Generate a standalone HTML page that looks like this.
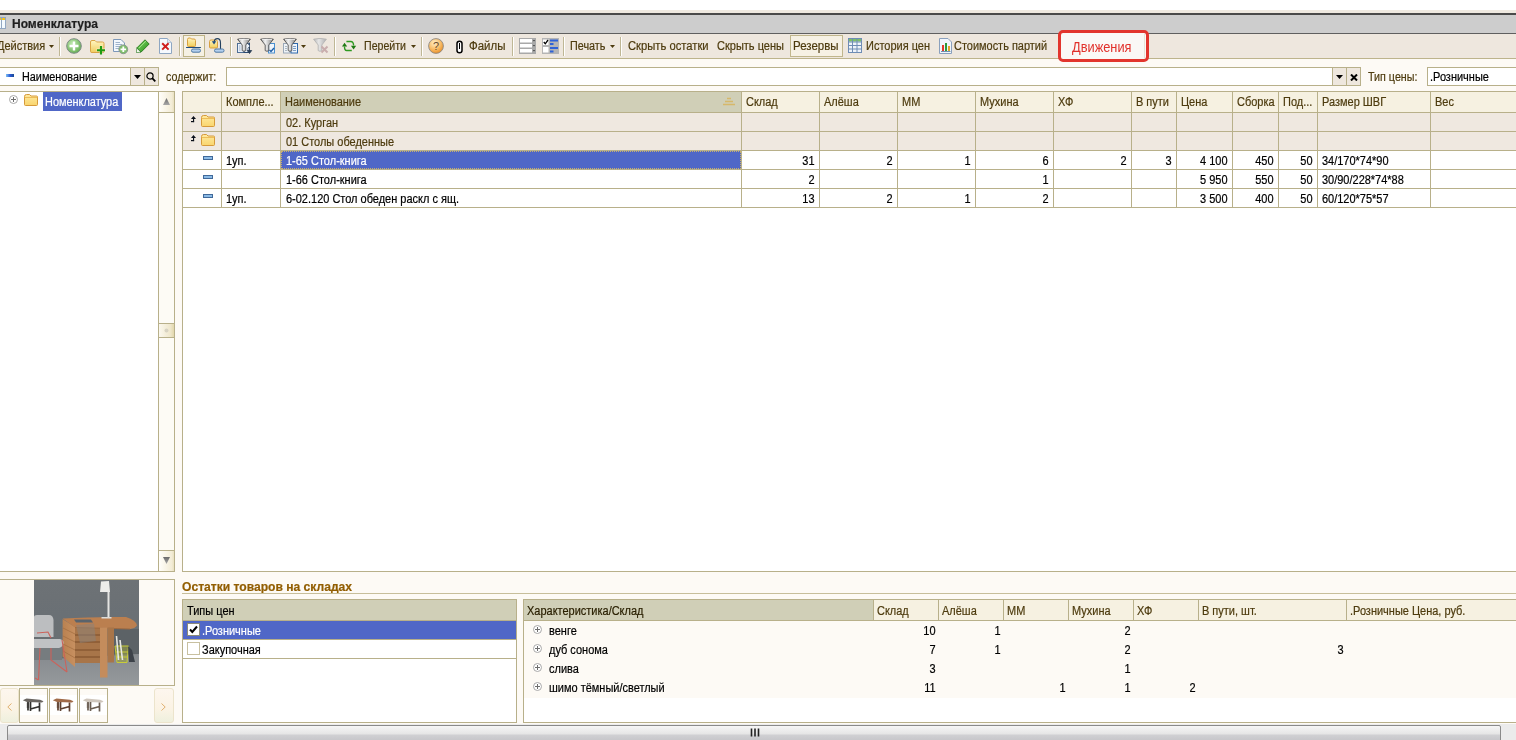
<!DOCTYPE html>
<html><head><meta charset="utf-8"><style>
html,body{margin:0;padding:0;}
body{width:1516px;height:740px;overflow:hidden;position:relative;background:#fdfaf5;font-family:"Liberation Sans",sans-serif;}
body>div,body>svg{position:absolute;box-sizing:content-box;}
.t{white-space:nowrap;line-height:13px;font-size:11px;-webkit-text-stroke:0.2px currentColor;}
</style></head><body>
<div style="left:0;top:0;width:1516px;height:10px;background:#fff"></div>
<div style="left:0px;top:10px;width:1516px;height:3px;background:#efe9e0;"></div><div style="left:0px;top:13px;width:1516px;height:2px;background:#4a4a4a;"></div><div style="left:0px;top:15px;width:1516px;height:18px;background:#cdcdcd;"></div><div style="left:0px;top:33px;width:1516px;height:1px;background:#5f5f5f;"></div><svg style="left:0px;top:17px" width="7" height="12" viewBox="0 0 7 12"><rect x="-2.5" y="0.5" width="4" height="11" fill="#f4fbff" stroke="#93a8c2"/><rect x="1.5" y="0.5" width="4" height="11" fill="#f4fbff" stroke="#93a8c2"/><rect x="2" y="1" width="3" height="2" fill="#f2c21e"/><rect x="-2" y="1" width="3" height="2" fill="#f2c21e"/></svg><div class="t" style="top:18px;color:#1e1e1e;font-size:12px;font-weight:bold;left:12.399126637554586px;transform:scaleX(1.0014556040756915);transform-origin:0 0;">Номенклатура</div><div style="left:0px;top:34px;width:1516px;height:24px;background:#eee7de;"></div><div style="left:0px;top:58px;width:1516px;height:1px;background:#bdb48c;"></div><div class="t" style="top:40px;color:#4d3b0e;font-size:12px;left:-3px;transform:scaleX(0.915);transform-origin:0 0;">Действия</div><svg style="left:49px;top:45px" width="5" height="3" viewBox="0 0 5 3"><path d="M0 0H5L2.5 3Z" fill="#4d3b0e"/></svg><div style="left:59px;top:37px;width:1px;height:19px;background:#bfb795;"></div><div style="left:60px;top:37px;width:1px;height:19px;background:#ffffff;"></div><svg style="left:66px;top:38px" width="16" height="16" viewBox="0 0 16 16"><defs><radialGradient id="gp" cx="40%" cy="35%" r="70%"><stop offset="0" stop-color="#c4ebb2"/><stop offset="1" stop-color="#62ac50"/></radialGradient></defs><circle cx="8" cy="8" r="7.3" fill="url(#gp)" stroke="#7d8b86" stroke-width="1"/><path d="M8 3.5V12.5M3.5 8H12.5" stroke="#fff" stroke-width="2.4"/></svg><svg style="left:90px;top:40px" width="16" height="15" viewBox="0 0 16 15"><defs><linearGradient id="fy" x1="0" y1="0" x2="0" y2="1"><stop offset="0" stop-color="#fff6c0"/><stop offset="1" stop-color="#f0cc60"/></linearGradient></defs><path d="M0.5 2Q0.5 0.5 2 0.5H5L6.5 2H12.5Q14 2 14 3.5V11.5Q14 12.5 12.5 12.5H2Q0.5 12.5 0.5 11.5Z" fill="url(#fy)" stroke="#d9a445"/><path d="M11 5.5V14.5M6.5 10H15.5" stroke="#fff" stroke-width="3.5" opacity=".35"/><path d="M11 6V14.5M7 10.25H15" stroke="#1e9a12" stroke-width="2.2"/></svg><svg style="left:113px;top:39px" width="16" height="16" viewBox="0 0 16 16"><path d="M0.5 0.5H8L11.5 4V12.5H0.5Z" fill="#f4f8fd" stroke="#7d98b9"/><path d="M2.5 3.5H7M2.5 5.5H9M2.5 7.5H9M2.5 9.5H6" stroke="#9fb3cc"/><circle cx="10.3" cy="10.3" r="4.4" fill="#7fbf6a" stroke="#8b9a90"/><path d="M10.3 7.5V13.1M7.5 10.3H13.1" stroke="#fff" stroke-width="1.8"/></svg><svg style="left:136px;top:39px" width="14" height="14" viewBox="0 0 14 14"><defs><linearGradient id="pg" x1="0" y1="0" x2="1" y2="1"><stop offset="0" stop-color="#8ee070"/><stop offset="1" stop-color="#1e8a14"/></linearGradient></defs><path d="M9 0.8L13.2 5L5 13.2L0.8 9Z" fill="url(#pg)" stroke="#1a6e12" stroke-width=".8"/><path d="M0.8 9L5 13.2L0.3 13.7Z" fill="#f4f8ee" stroke="#1a6e12" stroke-width=".6"/><path d="M3 9L10 2" stroke="#b8f0a0" stroke-width="1" opacity=".7"/></svg><svg style="left:159px;top:38px" width="13" height="16" viewBox="0 0 13 16"><path d="M0.5 0.5H8.5L12.5 4.5V15.5H0.5Z" fill="#f5f9fe" stroke="#8ea6c2"/><path d="M8.5 0.5V4.5H12.5" fill="#dfe8f2" stroke="#a8bcd2" stroke-width=".8"/><path d="M3.2 5.2L9.6 11.6M9.6 5.2L3.2 11.6" stroke="#cf1f1f" stroke-width="2"/></svg><div style="left:179px;top:37px;width:1px;height:19px;background:#bfb795;"></div><div style="left:180px;top:37px;width:1px;height:19px;background:#ffffff;"></div><div style="left:183px;top:35px;width:20px;height:20px;background:#f5f0e3;border:1px solid #bdb387;"></div><svg style="left:186px;top:37px" width="16" height="17" viewBox="0 0 16 17"><defs><linearGradient id="fy2" x1="0" y1="0" x2="0" y2="1"><stop offset="0" stop-color="#fff4c0"/><stop offset="1" stop-color="#f2cf5a"/></linearGradient></defs><path d="M1.5 2.5Q1.5 1 3 1H4.5L5.5 2H8Q9.5 2 9.5 3.5V8.5Q9.5 9.5 8.5 9.5H2.5Q1.5 9.5 1.5 8.5Z" fill="url(#fy2)" stroke="#d8a040"/><path d="M0.5 10.5H14.5" stroke="#1f4c7c" stroke-width="1.1" stroke-linecap="round"/><rect x="5.5" y="12" width="9" height="3.2" rx="1.5" fill="#b4d0ee" stroke="#4e78a4"/></svg><svg style="left:208px;top:37px" width="17" height="17" viewBox="0 0 17 17"><defs><linearGradient id="fy3" x1="0" y1="0" x2="0" y2="1"><stop offset="0" stop-color="#fff4c0"/><stop offset="1" stop-color="#f2cf5a"/></linearGradient></defs><path d="M1.5 4.5Q1.5 3 3 3H8Q9.5 3 9.5 4.5V10Q9.5 11 8.5 11H2.5Q1.5 11 1.5 10Z" fill="url(#fy3)" stroke="#d8a040"/><path d="M6 5.5C6.5 0.5 12.5 0 12.5 6V14" fill="none" stroke="#23405f" stroke-width="1.1"/><path d="M3.8 4.3L6 7.5L8.3 4.3Z" fill="#1f4c7c"/><rect x="6.5" y="12" width="9.5" height="3.2" rx="1.5" fill="#b4d0ee" stroke="#4e78a4"/></svg><div style="left:230px;top:37px;width:1px;height:19px;background:#bfb795;"></div><div style="left:231px;top:37px;width:1px;height:19px;background:#ffffff;"></div><svg style="left:237px;top:38px" width="16" height="16" viewBox="0 0 16 16"><defs><linearGradient id="fg" x1="0" y1="0" x2="1" y2="0"><stop offset="0" stop-color="#8a8a8a"/><stop offset=".35" stop-color="#f4f4f4"/><stop offset=".6" stop-color="#c8c8c8"/><stop offset="1" stop-color="#7a7a7a"/></linearGradient><linearGradient id="fgd" x1="0" y1="0" x2="1" y2="0"><stop offset="0" stop-color="#b8b8b8"/><stop offset=".4" stop-color="#e6e6e6"/><stop offset="1" stop-color="#b0b0b0"/></linearGradient></defs><rect x="0.5" y="5.5" width="7" height="9" fill="#eaf1f9" stroke="#4f6f96"/><path d="M2 8H3.5M2 10H3.5M2 12H3.5" stroke="#8aa0bc" stroke-width=".8"/><rect x="7" y="5.5" width="5.5" height="9" fill="#eaf1f9" stroke="#2c4a70"/><path d="M0.6 1.2Q7 -0.4 13.4 1.2L8.8 7V12.6Q7 14 5.2 12.6V7Z" fill="url(#fg)" stroke="#505050" stroke-width=".9"/><path d="M2 1.6Q7 0.6 12 1.6" stroke="#fff" stroke-width=".8" fill="none"/><path d="M12.5 4L11 6L13 8L11 10V13.5" fill="none" stroke="#5a6e88" stroke-width=".9"/><path d="M12.5 9V14.5M10.3 12.5L12.5 15.5L14.7 12.5Z" fill="#2a3d55" stroke="#2a3d55" stroke-width=".8"/></svg><svg style="left:260px;top:38px" width="16" height="16" viewBox="0 0 16 16"><defs><linearGradient id="fg" x1="0" y1="0" x2="1" y2="0"><stop offset="0" stop-color="#8a8a8a"/><stop offset=".35" stop-color="#f4f4f4"/><stop offset=".6" stop-color="#c8c8c8"/><stop offset="1" stop-color="#7a7a7a"/></linearGradient><linearGradient id="fgd" x1="0" y1="0" x2="1" y2="0"><stop offset="0" stop-color="#b8b8b8"/><stop offset=".4" stop-color="#e6e6e6"/><stop offset="1" stop-color="#b0b0b0"/></linearGradient></defs><rect x="8.5" y="5.5" width="6" height="9.5" fill="#eef4fb" stroke="#4a90d0"/><path d="M0.6 1.2Q7 -0.4 13.4 1.2L8.8 7V12.6Q7 14 5.2 12.6V7Z" fill="url(#fg)" stroke="#505050" stroke-width=".9"/><path d="M2 1.6Q7 0.6 12 1.6" stroke="#fff" stroke-width=".8" fill="none"/><path d="M9.5 12L11 13.5L14 10" fill="none" stroke="#1f5fa8" stroke-width="1.4"/></svg><svg style="left:283px;top:38px" width="16" height="16" viewBox="0 0 16 16"><defs><linearGradient id="fg" x1="0" y1="0" x2="1" y2="0"><stop offset="0" stop-color="#8a8a8a"/><stop offset=".35" stop-color="#f4f4f4"/><stop offset=".6" stop-color="#c8c8c8"/><stop offset="1" stop-color="#7a7a7a"/></linearGradient><linearGradient id="fgd" x1="0" y1="0" x2="1" y2="0"><stop offset="0" stop-color="#b8b8b8"/><stop offset=".4" stop-color="#e6e6e6"/><stop offset="1" stop-color="#b0b0b0"/></linearGradient></defs><rect x="0.5" y="5.5" width="6.5" height="9.5" fill="#eef2f6" stroke="#9aa8b8"/><path d="M2 8.5H4M2 10.5H4M2 12.5H4" stroke="#9aa8b8" stroke-width=".8"/><rect x="8" y="5.5" width="6.5" height="9.5" fill="#eef4fb" stroke="#2f6aae"/><path d="M10 8.5H13M10 10.5H13M10 12.5H13" stroke="#5f88b8" stroke-width=".8"/><path d="M0.6 1.2Q7 -0.4 13.4 1.2L8.8 7V12.6Q7 14 5.2 12.6V7Z" fill="url(#fg)" stroke="#505050" stroke-width=".9"/><path d="M2 1.6Q7 0.6 12 1.6" stroke="#fff" stroke-width=".8" fill="none"/></svg><svg style="left:301px;top:45px" width="5" height="3" viewBox="0 0 5 3"><path d="M0 0H5L2.5 3Z" fill="#4d3b0e"/></svg><svg style="left:313px;top:38px" width="16" height="16" viewBox="0 0 16 16"><defs><linearGradient id="fg" x1="0" y1="0" x2="1" y2="0"><stop offset="0" stop-color="#8a8a8a"/><stop offset=".35" stop-color="#f4f4f4"/><stop offset=".6" stop-color="#c8c8c8"/><stop offset="1" stop-color="#7a7a7a"/></linearGradient><linearGradient id="fgd" x1="0" y1="0" x2="1" y2="0"><stop offset="0" stop-color="#b8b8b8"/><stop offset=".4" stop-color="#e6e6e6"/><stop offset="1" stop-color="#b0b0b0"/></linearGradient></defs><path d="M0.6 1.2Q7 -0.4 13.4 1.2L8.8 7V12.6Q7 14 5.2 12.6V7Z" fill="url(#fgd)" stroke="#b4b4b4" stroke-width=".9"/><path d="M8.5 8.5L14.5 14.5M14.5 8.5L8.5 14.5" stroke="#c9adad" stroke-width="2"/></svg><div style="left:334px;top:37px;width:1px;height:19px;background:#bfb795;"></div><div style="left:335px;top:37px;width:1px;height:19px;background:#ffffff;"></div><svg style="left:342px;top:40px" width="15" height="12" viewBox="0 0 15 12"><path d="M4.4 1.5H8.7Q11.5 1.5 11.6 5.5M9.8 10.5H4.6Q2.5 10.5 2.5 6.5" fill="none" stroke="#2f9a22" stroke-width="1.4"/><path d="M8.9 5.8H14.2L11.6 9.6Z" fill="#1f7a14"/><path d="M-0.1 6.6H5.2L2.5 2.8Z" fill="#1f7a14"/></svg><div class="t" style="top:40px;color:#4d3b0e;font-size:12px;left:364.4694736842105px;transform:scaleX(0.8842105263157894);transform-origin:0 0;">Перейти</div><svg style="left:411px;top:45px" width="5" height="3" viewBox="0 0 5 3"><path d="M0 0H5L2.5 3Z" fill="#4d3b0e"/></svg><div style="left:421px;top:37px;width:1px;height:19px;background:#bfb795;"></div><div style="left:422px;top:37px;width:1px;height:19px;background:#ffffff;"></div><svg style="left:428px;top:38px" width="16" height="16" viewBox="0 0 16 16"><defs><radialGradient id="qg" cx="40%" cy="30%" r="75%"><stop offset="0" stop-color="#fff0c8"/><stop offset=".6" stop-color="#f8b860"/><stop offset="1" stop-color="#e88a20"/></radialGradient></defs><circle cx="8" cy="8" r="7.4" fill="url(#qg)" stroke="#8d8a86" stroke-width=".9"/><text x="8" y="12" font-family="Liberation Sans" font-size="11" text-anchor="middle" fill="#6b4a2a">?</text></svg><svg style="left:456px;top:40px" width="7" height="14" viewBox="0 0 7 14"><path d="M1 3.5C1 0.5 6 0.5 6 3.5V10.5C6 13.5 1 13.5 1 10.5Z" fill="#fff" stroke="#000" stroke-width="1.5"/><path d="M3.5 3V9" stroke="#000" stroke-width="1"/></svg><div class="t" style="top:40px;color:#4d3b0e;font-size:12px;left:469.4271475409836px;transform:scaleX(0.9547540983606557);transform-origin:0 0;">Файлы</div><div style="left:512px;top:37px;width:1px;height:19px;background:#bfb795;"></div><div style="left:513px;top:37px;width:1px;height:19px;background:#ffffff;"></div><svg style="left:519px;top:38px" width="17" height="16" viewBox="0 0 17 16"><rect x="0" y="0" width="17" height="16" fill="#a9a9a9"/><rect x="1" y="1" width="12" height="3.5" fill="#fff"/><rect x="1" y="6" width="12" height="3.5" fill="#fff"/><rect x="1" y="11" width="12" height="3.5" fill="#fff"/><path d="M14 2L16 2L15 3.5ZM14 7L16 7L15 8.5ZM14 12L16 12L15 13.5Z" fill="#333"/></svg><svg style="left:542px;top:38px" width="17" height="16" viewBox="0 0 17 16"><rect x="0" y="0" width="17" height="16" fill="#b5b5b5"/><rect x="1" y="1.5" width="5.5" height="5.5" fill="#fff"/><path d="M1.8 4L3.3 5.8L6 2" fill="none" stroke="#000" stroke-width="1.3"/><rect x="1" y="9" width="5.5" height="5.5" fill="#fff"/><rect x="8" y="1.5" width="8" height="2" fill="#2f63d8"/><rect x="8" y="5" width="3.5" height="2" fill="#2f63d8"/><rect x="8" y="9" width="8" height="2" fill="#2f63d8"/><rect x="8" y="12.5" width="3.5" height="2" fill="#2f63d8"/></svg><div style="left:563px;top:37px;width:1px;height:19px;background:#bfb795;"></div><div style="left:564px;top:37px;width:1px;height:19px;background:#ffffff;"></div><div class="t" style="top:40px;color:#4d3b0e;font-size:12px;left:570.4603821656051px;transform:scaleX(0.8993630573248407);transform-origin:0 0;">Печать</div><svg style="left:610px;top:45px" width="5" height="3" viewBox="0 0 5 3"><path d="M0 0H5L2.5 3Z" fill="#4d3b0e"/></svg><div style="left:620px;top:37px;width:1px;height:19px;background:#bfb795;"></div><div style="left:621px;top:37px;width:1px;height:19px;background:#ffffff;"></div><div class="t" style="top:40px;color:#4d3b0e;font-size:12px;left:628.4386086956522px;transform:scaleX(0.9356521739130436);transform-origin:0 0;">Скрыть остатки</div><div class="t" style="top:40px;color:#4d3b0e;font-size:12px;left:717.4493150684932px;transform:scaleX(0.9178082191780822);transform-origin:0 0;">Скрыть цены</div><div style="left:790px;top:35px;width:51px;height:20px;background:#f6f1e4;border:1px solid #c0b68c;"></div><div class="t" style="top:40px;color:#4d3b0e;font-size:12px;left:793.4267716535433px;transform:scaleX(0.9553805774278216);transform-origin:0 0;">Резервы</div><svg style="left:848px;top:38px" width="14" height="15" viewBox="0 0 14 15"><rect x="0.5" y="0.5" width="13" height="14" fill="#eef3fa" stroke="#6f8db5"/><rect x="1" y="1" width="12" height="2.5" fill="#7cc067"/><path d="M0.5 4H13.5M0.5 7.5H13.5M0.5 11H13.5M4.5 0.5V14.5M9 0.5V14.5" stroke="#6f8db5"/></svg><div class="t" style="top:40px;color:#4d3b0e;font-size:12px;left:866px;transform:scaleX(0.915);transform-origin:0 0;">История цен</div><svg style="left:939px;top:38px" width="13" height="16" viewBox="0 0 13 16"><path d="M0.5 0.5H9L12.5 4V15.5H0.5Z" fill="#f1f6fc" stroke="#8aa0bd"/><rect x="3" y="7" width="2" height="6" fill="#e23b2b"/><rect x="6" y="5" width="2" height="8" fill="#2e9b3a"/><rect x="9" y="8" width="2" height="5" fill="#e2a72b"/><path d="M2 13.5H11.5" stroke="#7090b0"/></svg><div class="t" style="top:40px;color:#4d3b0e;font-size:12px;left:954.4522699386503px;transform:scaleX(0.912883435582822);transform-origin:0 0;">Стоимость партий</div><div style="left:1058px;top:30px;width:85px;height:26px;border:3.4px solid #e2352d;border-radius:5px;background:#faf8f5;"></div><div style="left:1144px;top:34px;width:1px;height:25px;background:#e8e2d6;"></div><div class="t" style="top:41px;color:#e1302a;font-size:14px;left:1072.4507692307693px;transform:scaleX(0.9153846153846154);transform-origin:0 0;-webkit-text-stroke:0;">Движения</div><div style="left:-2px;top:67px;width:159px;height:17px;background:#fff;border:1px solid #b8b08a;"></div><svg style="left:6px;top:74px" width="8" height="3" viewBox="0 0 8 3"><defs><linearGradient id="bd" x1="0" x2="1"><stop offset="0" stop-color="#7ec0f0"/><stop offset=".5" stop-color="#2a5ad8"/><stop offset="1" stop-color="#1a4a90"/></linearGradient></defs><rect width="8" height="3" fill="url(#bd)"/></svg><div class="t" style="top:71px;color:#000;font-size:12px;left:22.458646616541355px;transform:scaleX(0.9022556390977443);transform-origin:0 0;">Наименование</div><div style="left:130px;top:68px;width:1px;height:17px;background:#b8b08a;"></div><div style="left:131px;top:68px;width:13px;height:17px;background:#eee7de;"></div><div style="left:144px;top:68px;width:1px;height:17px;background:#b8b08a;"></div><div style="left:145px;top:68px;width:13px;height:17px;background:#eee7de;"></div><svg style="left:134px;top:75px" width="7" height="4" viewBox="0 0 7 4"><path d="M0 0H7L3.5 4Z" fill="#000"/></svg><svg style="left:146px;top:72px" width="10" height="10" viewBox="0 0 10 10"><circle cx="4" cy="4" r="3.1" fill="none" stroke="#000" stroke-width="1.2"/><path d="M6.2 6.2L9.3 9.3" stroke="#000" stroke-width="1.8"/></svg><div class="t" style="top:71px;color:#4d3b0e;font-size:12px;left:166.4658407079646px;transform:scaleX(0.8902654867256636);transform-origin:0 0;">содержит:</div><div style="left:226px;top:67px;width:1133px;height:17px;background:#fff;border:1px solid #b8b08a;"></div><div style="left:1332px;top:68px;width:1px;height:17px;background:#b8b08a;"></div><div style="left:1333px;top:68px;width:13px;height:17px;background:#eee7de;"></div><div style="left:1346px;top:68px;width:1px;height:17px;background:#b8b08a;"></div><div style="left:1347px;top:68px;width:13px;height:17px;background:#eee7de;"></div><svg style="left:1336px;top:75px" width="7" height="4" viewBox="0 0 7 4"><path d="M0 0H7L3.5 4Z" fill="#000"/></svg><svg style="left:1350px;top:74px" width="8" height="7" viewBox="0 0 8 7"><path d="M1 0.5L7 6.5M7 0.5L1 6.5" stroke="#000" stroke-width="2"/></svg><div class="t" style="top:71px;color:#4d3b0e;font-size:12px;left:1368.463656884876px;transform:scaleX(0.8939051918735892);transform-origin:0 0;">Тип цены:</div><div style="left:1427px;top:67px;width:98px;height:17px;background:#fff;border:1px solid #b8b08a;"></div><div class="t" style="top:71px;color:#000;font-size:12px;left:1430px;transform:scaleX(0.915);transform-origin:0 0;">.Розничные</div><div style="left:-2px;top:91px;width:175px;height:479px;background:#fff;border:1px solid #b8b08a;"></div><div style="left:158px;top:92px;width:1px;height:479px;background:#b8b08a;"></div><div style="left:159px;top:92px;width:15px;height:479px;background:#fdfbf5;"></div><div style="left:159px;top:92px;width:15px;height:20px;background:linear-gradient(90deg,#fffefa,#f3ecd6 85%,#e9e0c0);"></div><div style="left:159px;top:112px;width:15px;height:1px;background:#b8b08a;"></div><svg style="left:163px;top:98px" width="7" height="7" viewBox="0 0 7 7"><defs><linearGradient id="ag" x1="0" y1="0" x2="0" y2="1"><stop offset="0" stop-color="#6a6a6a"/><stop offset="1" stop-color="#a8a8a8"/></linearGradient></defs><path d="M3.5 0L7 7H0Z" fill="url(#ag)"/></svg><div style="left:159px;top:550px;width:15px;height:21px;background:linear-gradient(90deg,#fffefa,#f3ecd6 85%,#e9e0c0);"></div><div style="left:159px;top:550px;width:15px;height:1px;background:#b8b08a;"></div><svg style="left:163px;top:557px" width="7" height="7" viewBox="0 0 7 7"><defs><linearGradient id="ag2" x1="0" y1="0" x2="0" y2="1"><stop offset="0" stop-color="#6a6a6a"/><stop offset="1" stop-color="#a8a8a8"/></linearGradient></defs><path d="M0 0H7L3.5 7Z" fill="url(#ag2)"/></svg><div style="left:159px;top:323px;width:15px;height:15px;background:linear-gradient(90deg,#fbf8ee,#efe7cc 75%,#e2d7ac);border-top:1px solid #b8b08a;border-bottom:1px solid #b8b08a;box-sizing:border-box;"></div><svg style="left:164px;top:328px" width="5" height="5" viewBox="0 0 5 5"><circle cx="2.5" cy="2.5" r="2" fill="#d8d3c2"/></svg><svg style="left:9px;top:95px" width="9" height="9" viewBox="0 0 9 9"><circle cx="4.5" cy="4.5" r="4" fill="#fff" stroke="#a8a8a8"/><path d="M4.5 2V7M2 4.5H7" stroke="#6e6e6e" stroke-width="1"/></svg><svg style="left:24px;top:94px" width="14" height="12" viewBox="0 0 14 12"><defs><linearGradient id="fo1" x1="0" y1="0" x2="0" y2="1"><stop offset="0" stop-color="#ffeaa0"/><stop offset="1" stop-color="#f9d56e"/></linearGradient></defs><path d="M0.5 2.5Q0.5 0.5 2.5 0.5H5.5L7 2H12.5Q13.5 2 13.5 3V10.5Q13.5 11.5 12.5 11.5H1.5Q0.5 11.5 0.5 10.5Z" fill="url(#fo1)" stroke="#d69a3a"/><path d="M0.5 3.5H13.5" stroke="#e8b24a" stroke-width=".8"/></svg><div style="left:43px;top:92px;width:79px;height:19px;background:#5067c7;"></div><div class="t" style="top:96px;color:#fff;font-size:12px;left:45.454511627906975px;transform:scaleX(0.9091472868217054);transform-origin:0 0;">Номенклатура</div><div style="left:182px;top:91px;width:1334px;height:479px;background:#fff;border:1px solid #b8b08a;"></div><div style="left:183px;top:92px;width:1333px;height:20px;background:#f6f1e1;"></div><div style="left:281px;top:92px;width:460px;height:20px;background:#d0cfb7;"></div><div style="left:183px;top:112px;width:1333px;height:1px;background:#b8b08a;"></div><div style="left:183px;top:113px;width:1333px;height:18px;background:#efe8e0;"></div><div style="left:183px;top:131px;width:1333px;height:1px;background:#b8b08a;"></div><div style="left:183px;top:132px;width:1333px;height:18px;background:#efe8e0;"></div><div style="left:183px;top:150px;width:1333px;height:1px;background:#b8b08a;"></div><div style="left:183px;top:169px;width:1333px;height:1px;background:#b8b08a;"></div><div style="left:183px;top:188px;width:1333px;height:1px;background:#b8b08a;"></div><div style="left:183px;top:207px;width:1333px;height:1px;background:#b8b08a;"></div><div style="left:221px;top:92px;width:1px;height:115px;background:#b8b08a;"></div><div style="left:280px;top:92px;width:1px;height:115px;background:#b8b08a;"></div><div style="left:741px;top:92px;width:1px;height:115px;background:#b8b08a;"></div><div style="left:819px;top:92px;width:1px;height:115px;background:#b8b08a;"></div><div style="left:897px;top:92px;width:1px;height:115px;background:#b8b08a;"></div><div style="left:975px;top:92px;width:1px;height:115px;background:#b8b08a;"></div><div style="left:1053px;top:92px;width:1px;height:115px;background:#b8b08a;"></div><div style="left:1131px;top:92px;width:1px;height:115px;background:#b8b08a;"></div><div style="left:1176px;top:92px;width:1px;height:115px;background:#b8b08a;"></div><div style="left:1232px;top:92px;width:1px;height:115px;background:#b8b08a;"></div><div style="left:1278px;top:92px;width:1px;height:115px;background:#b8b08a;"></div><div style="left:1317px;top:92px;width:1px;height:115px;background:#b8b08a;"></div><div style="left:1430px;top:92px;width:1px;height:115px;background:#b8b08a;"></div><div class="t" style="top:96px;color:#4d3b0e;font-size:12px;left:226px;transform:scaleX(0.915);transform-origin:0 0;">Компле...</div><div class="t" style="top:96px;color:#4d3b0e;font-size:12px;left:285px;transform:scaleX(0.915);transform-origin:0 0;">Наименование</div><div class="t" style="top:96px;color:#4d3b0e;font-size:12px;left:746px;transform:scaleX(0.915);transform-origin:0 0;">Склад</div><div class="t" style="top:96px;color:#4d3b0e;font-size:12px;left:824px;transform:scaleX(0.915);transform-origin:0 0;">Алёша</div><div class="t" style="top:96px;color:#4d3b0e;font-size:12px;left:902px;transform:scaleX(0.915);transform-origin:0 0;">ММ</div><div class="t" style="top:96px;color:#4d3b0e;font-size:12px;left:980px;transform:scaleX(0.915);transform-origin:0 0;">Мухина</div><div class="t" style="top:96px;color:#4d3b0e;font-size:12px;left:1058px;transform:scaleX(0.915);transform-origin:0 0;">ХФ</div><div class="t" style="top:96px;color:#4d3b0e;font-size:12px;left:1136px;transform:scaleX(0.915);transform-origin:0 0;">В пути</div><div class="t" style="top:96px;color:#4d3b0e;font-size:12px;left:1181px;transform:scaleX(0.915);transform-origin:0 0;">Цена</div><div class="t" style="top:96px;color:#4d3b0e;font-size:12px;left:1237px;transform:scaleX(0.915);transform-origin:0 0;">Сборка</div><div class="t" style="top:96px;color:#4d3b0e;font-size:12px;left:1283px;transform:scaleX(0.915);transform-origin:0 0;">Под...</div><div class="t" style="top:96px;color:#4d3b0e;font-size:12px;left:1322px;transform:scaleX(0.915);transform-origin:0 0;">Размер ШВГ</div><div class="t" style="top:96px;color:#4d3b0e;font-size:12px;left:1435px;transform:scaleX(0.915);transform-origin:0 0;">Вес</div><svg style="left:723px;top:97px" width="12" height="9" viewBox="0 0 12 9"><path d="M4 1.5H8M2 4.5H10M0 7.5H12" stroke="#d6b86a" stroke-width="1.3"/></svg><svg style="left:190px;top:115px" width="7" height="8" viewBox="0 0 7 8"><path d="M3.5 1L6 3.9H1Z" fill="#0a0f1a"/><rect x="3" y="3.5" width="1.1" height="3.6" fill="#0a0f1a"/><rect x="1" y="6" width="3.1" height="1.2" fill="#0a0f1a"/></svg><svg style="left:201px;top:115px" width="14" height="12" viewBox="0 0 14 12"><defs><linearGradient id="fg0" x1="0" y1="0" x2="0" y2="1"><stop offset="0" stop-color="#ffeaa0"/><stop offset="1" stop-color="#f9d56e"/></linearGradient></defs><path d="M0.5 2.5Q0.5 0.5 2.5 0.5H5.5L7 2H12.5Q13.5 2 13.5 3V10.5Q13.5 11.5 12.5 11.5H1.5Q0.5 11.5 0.5 10.5Z" fill="url(#fg0)" stroke="#d69a3a"/><path d="M0.5 3.5H13.5" stroke="#e8b24a" stroke-width=".8"/></svg><div class="t" style="top:117px;color:#4d3b0e;font-size:12px;left:286px;transform:scaleX(0.915);transform-origin:0 0;">02. Курган</div><svg style="left:190px;top:134px" width="7" height="8" viewBox="0 0 7 8"><path d="M3.5 1L6 3.9H1Z" fill="#0a0f1a"/><rect x="3" y="3.5" width="1.1" height="3.6" fill="#0a0f1a"/><rect x="1" y="6" width="3.1" height="1.2" fill="#0a0f1a"/></svg><svg style="left:201px;top:134px" width="14" height="12" viewBox="0 0 14 12"><defs><linearGradient id="fg1" x1="0" y1="0" x2="0" y2="1"><stop offset="0" stop-color="#ffeaa0"/><stop offset="1" stop-color="#f9d56e"/></linearGradient></defs><path d="M0.5 2.5Q0.5 0.5 2.5 0.5H5.5L7 2H12.5Q13.5 2 13.5 3V10.5Q13.5 11.5 12.5 11.5H1.5Q0.5 11.5 0.5 10.5Z" fill="url(#fg1)" stroke="#d69a3a"/><path d="M0.5 3.5H13.5" stroke="#e8b24a" stroke-width=".8"/></svg><div class="t" style="top:136px;color:#4d3b0e;font-size:12px;left:286px;transform:scaleX(0.915);transform-origin:0 0;">01 Столы обеденные</div><div style="left:281px;top:151px;width:460px;height:18px;background:#5067c7;outline:1px dotted #c8b070;outline-offset:-1px;"></div><svg style="left:203px;top:156px" width="10" height="4" viewBox="0 0 10 4"><rect x="0.5" y="0.5" width="9" height="3" fill="#8cbbe6" stroke="#40699a"/></svg><div class="t" style="top:155px;color:#000;font-size:12px;left:226px;transform:scaleX(0.915);transform-origin:0 0;">1уп.</div><div class="t" style="top:155px;color:#fff;font-size:12px;left:286px;transform:scaleX(0.915);transform-origin:0 0;">1-65 Стол-книга</div><div class="t" style="top:155px;color:#000;font-size:12px;left:737.50px;width:76.50px;text-align:right;transform:scaleX(0.915);transform-origin:100% 0;">31</div><div class="t" style="top:155px;color:#000;font-size:12px;left:815.50px;width:76.50px;text-align:right;transform:scaleX(0.915);transform-origin:100% 0;">2</div><div class="t" style="top:155px;color:#000;font-size:12px;left:893.50px;width:76.50px;text-align:right;transform:scaleX(0.915);transform-origin:100% 0;">1</div><div class="t" style="top:155px;color:#000;font-size:12px;left:971.50px;width:76.50px;text-align:right;transform:scaleX(0.915);transform-origin:100% 0;">6</div><div class="t" style="top:155px;color:#000;font-size:12px;left:1049.50px;width:76.50px;text-align:right;transform:scaleX(0.915);transform-origin:100% 0;">2</div><div class="t" style="top:155px;color:#000;font-size:12px;left:1094.50px;width:76.50px;text-align:right;transform:scaleX(0.915);transform-origin:100% 0;">3</div><div class="t" style="top:155px;color:#000;font-size:12px;left:1150.50px;width:76.50px;text-align:right;transform:scaleX(0.915);transform-origin:100% 0;">4 100</div><div class="t" style="top:155px;color:#000;font-size:12px;left:1196.50px;width:76.50px;text-align:right;transform:scaleX(0.915);transform-origin:100% 0;">450</div><div class="t" style="top:155px;color:#000;font-size:12px;left:1235.50px;width:76.50px;text-align:right;transform:scaleX(0.915);transform-origin:100% 0;">50</div><div class="t" style="top:155px;color:#000;font-size:12px;left:1322px;transform:scaleX(0.915);transform-origin:0 0;">34/170*74*90</div><svg style="left:203px;top:175px" width="10" height="4" viewBox="0 0 10 4"><rect x="0.5" y="0.5" width="9" height="3" fill="#8cbbe6" stroke="#40699a"/></svg><div class="t" style="top:174px;color:#000;font-size:12px;left:226px;transform:scaleX(0.915);transform-origin:0 0;"></div><div class="t" style="top:174px;color:#000;font-size:12px;left:286px;transform:scaleX(0.915);transform-origin:0 0;">1-66 Стол-книга</div><div class="t" style="top:174px;color:#000;font-size:12px;left:737.50px;width:76.50px;text-align:right;transform:scaleX(0.915);transform-origin:100% 0;">2</div><div class="t" style="top:174px;color:#000;font-size:12px;left:971.50px;width:76.50px;text-align:right;transform:scaleX(0.915);transform-origin:100% 0;">1</div><div class="t" style="top:174px;color:#000;font-size:12px;left:1150.50px;width:76.50px;text-align:right;transform:scaleX(0.915);transform-origin:100% 0;">5 950</div><div class="t" style="top:174px;color:#000;font-size:12px;left:1196.50px;width:76.50px;text-align:right;transform:scaleX(0.915);transform-origin:100% 0;">550</div><div class="t" style="top:174px;color:#000;font-size:12px;left:1235.50px;width:76.50px;text-align:right;transform:scaleX(0.915);transform-origin:100% 0;">50</div><div class="t" style="top:174px;color:#000;font-size:12px;left:1322px;transform:scaleX(0.915);transform-origin:0 0;">30/90/228*74*88</div><svg style="left:203px;top:194px" width="10" height="4" viewBox="0 0 10 4"><rect x="0.5" y="0.5" width="9" height="3" fill="#8cbbe6" stroke="#40699a"/></svg><div class="t" style="top:193px;color:#000;font-size:12px;left:226px;transform:scaleX(0.915);transform-origin:0 0;">1уп.</div><div class="t" style="top:193px;color:#000;font-size:12px;left:286px;transform:scaleX(0.915);transform-origin:0 0;">6-02.120 Стол обеден раскл с ящ.</div><div class="t" style="top:193px;color:#000;font-size:12px;left:737.50px;width:76.50px;text-align:right;transform:scaleX(0.915);transform-origin:100% 0;">13</div><div class="t" style="top:193px;color:#000;font-size:12px;left:815.50px;width:76.50px;text-align:right;transform:scaleX(0.915);transform-origin:100% 0;">2</div><div class="t" style="top:193px;color:#000;font-size:12px;left:893.50px;width:76.50px;text-align:right;transform:scaleX(0.915);transform-origin:100% 0;">1</div><div class="t" style="top:193px;color:#000;font-size:12px;left:971.50px;width:76.50px;text-align:right;transform:scaleX(0.915);transform-origin:100% 0;">2</div><div class="t" style="top:193px;color:#000;font-size:12px;left:1150.50px;width:76.50px;text-align:right;transform:scaleX(0.915);transform-origin:100% 0;">3 500</div><div class="t" style="top:193px;color:#000;font-size:12px;left:1196.50px;width:76.50px;text-align:right;transform:scaleX(0.915);transform-origin:100% 0;">400</div><div class="t" style="top:193px;color:#000;font-size:12px;left:1235.50px;width:76.50px;text-align:right;transform:scaleX(0.915);transform-origin:100% 0;">50</div><div class="t" style="top:193px;color:#000;font-size:12px;left:1322px;transform:scaleX(0.915);transform-origin:0 0;">60/120*75*57</div><div style="left:-2px;top:579px;width:175px;height:105px;background:#fdfaf5;border:1px solid #b8b08a;"></div><svg style="left:34px;top:580px" width="105" height="105" viewBox="0 0 105 105"><defs><filter id="blr" x="0" y="0" width="1" height="1"><feGaussianBlur stdDeviation="0.45"/></filter></defs><g filter="url(#blr)"><defs><linearGradient id="wall" x1="0" y1="0" x2="0" y2="1"><stop offset="0" stop-color="#6d7276"/><stop offset="1" stop-color="#676c70"/></linearGradient>
<linearGradient id="flr" x1="0" y1="0" x2="0" y2="1"><stop offset="0" stop-color="#868a8e"/><stop offset="1" stop-color="#95999c"/></linearGradient>
<linearGradient id="leaf" x1="0" y1="0" x2="1" y2="0"><stop offset="0" stop-color="#b98150"/><stop offset="1" stop-color="#c79060"/></linearGradient></defs>
<rect width="105" height="105" fill="url(#wall)"/>
<path d="M0 80L105 74V105H0Z" fill="url(#flr)"/>
<path d="M0 62H28V80H0Z" fill="#767b7f"/>
<path d="M80 49H105V74H80Z" fill="#5c6266"/>
<path d="M41 47H66V83H41Z" fill="#a87448"/>
<path d="M41 55H66M41 62H66M41 70H66M41 77H66" stroke="#80532e" stroke-width="1.4" opacity=".75"/>
<path d="M28.6 39L41 47V87L28.6 76.5Z" fill="url(#leaf)"/>
<path d="M29 48L41 54M29 56L41 62M29 64L41 70M29 71L41 78" stroke="#a06c40" stroke-width="1" opacity=".7"/>
<path d="M28.6 38.5Q60 36.5 92 37Q102 40 103 45.5Q101 48.5 96 49L41 47.5Z" fill="#bb7f50"/>
<path d="M41 47.5L96 49" stroke="#9e6a40" stroke-width="1"/>
<path d="M40 39.5H57L59 42.5H42Z" fill="#5a646c"/>
<path d="M42 45L60 43.5L62 61L46 63Z" fill="#8c8278" opacity=".55"/>
<rect x="66" y="47.5" width="7.5" height="50" fill="#c48c5c"/>
<rect x="73.5" y="47.5" width="6.5" height="35" fill="#a87448"/>
<path d="M0 37Q0 35 3 35H15Q19 35 19.5 40V57H0Z" fill="#bcbec0"/>
<path d="M0 59H26Q30 60 29.5 63Q29 67 25 68H0Z" fill="#c0c2c4"/>
<path d="M6 68L4.5 100M1 98L4.5 100M17 68V80L33 92M28 60L33 92M3 53L14 52L17 58" fill="none" stroke="#cc625a" stroke-width="1.1"/>
<path d="M67 1.5L75 1L76 12H66Z" fill="#ececea"/>
<rect x="73.5" y="12" width="2" height="26" fill="#e4e4e2"/>
<path d="M67.5 37H77.5V38.5H67.5Z" fill="#dcdcda"/>
<path d="M81 66H94.5L93 82.5H83Z" fill="#9aa040" opacity=".55"/>
<path d="M81 66H94.5L93 82.5H83ZM82 72H94M82.5 77H93.5" fill="none" stroke="#c8cc38" stroke-width="1"/>
<path d="M82.5 56L84.5 80M86 60L88.5 80" stroke="#e8e8e2" stroke-width="1.6"/>
<path d="M94 66L98 70L101 82H95Z" fill="#3c4348"/></g></svg><div style="left:0px;top:688px;width:17px;height:33px;border:1px solid #ece4cc;border-radius:3px;background:linear-gradient(#fdf6ee,#fbf3e4 60%,#eef0de);"></div><div style="left:154px;top:688px;width:18px;height:33px;border:1px solid #ece4cc;border-radius:3px;background:linear-gradient(#fdf6ee,#fbf3e4 60%,#eef0de);"></div><svg style="left:7px;top:703px" width="5" height="8" viewBox="0 0 5 8"><path d="M4.5 0.5L0.8 4L4.5 7.5" fill="none" stroke="#e0b070" stroke-width="1"/></svg><svg style="left:161px;top:703px" width="5" height="8" viewBox="0 0 5 8"><path d="M0.5 0.5L4.2 4L0.5 7.5" fill="none" stroke="#e0b070" stroke-width="1"/></svg><div style="left:19px;top:688px;width:27px;height:33px;background:#fdfaf5;border:1px solid #b8b08a;"></div><div style="left:20px;top:695px;width:27px;height:20px;background:#fff;"></div><svg style="left:22px;top:697px" width="23" height="17" viewBox="0 0 23 17"><path d="M0.8 3.2L4.5 1.5L18 2.8L21.5 4.2L20 5.6L5 5Z" fill="#6a6560"/><path d="M6 5V13.5M8.5 5V14M17.5 5.5V14.5M8.5 12L17.5 9.5" stroke="#33312e" stroke-width="1.7"/><path d="M6 5.5V11" stroke="#33312e" stroke-width="2.5" opacity=".6"/></svg><div style="left:49px;top:688px;width:27px;height:33px;background:#fdfaf5;border:1px solid #b8b08a;"></div><div style="left:50px;top:695px;width:27px;height:20px;background:#fff;"></div><svg style="left:52px;top:697px" width="23" height="17" viewBox="0 0 23 17"><path d="M0.8 3.2L4.5 1.5L18 2.8L21.5 4.2L20 5.6L5 5Z" fill="#a06a48"/><path d="M6 5V13.5M8.5 5V14M17.5 5.5V14.5M8.5 12L17.5 9.5" stroke="#5e4030" stroke-width="1.7"/><path d="M6 5.5V11" stroke="#5e4030" stroke-width="2.5" opacity=".6"/></svg><div style="left:79px;top:688px;width:27px;height:33px;background:#fdfaf5;border:1px solid #b8b08a;"></div><div style="left:80px;top:695px;width:27px;height:20px;background:#fff;"></div><svg style="left:82px;top:697px" width="23" height="17" viewBox="0 0 23 17"><path d="M0.8 3.2L4.5 1.5L18 2.8L21.5 4.2L20 5.6L5 5Z" fill="#cfc6bc"/><path d="M6 5V13.5M8.5 5V14M17.5 5.5V14.5M8.5 12L17.5 9.5" stroke="#6a5c50" stroke-width="1.7"/><path d="M6 5.5V11" stroke="#6a5c50" stroke-width="2.5" opacity=".6"/></svg><div class="t" style="top:581px;color:#925e02;font-size:12px;font-weight:bold;left:182.39555555555555px;transform:scaleX(1.0074074074074073);transform-origin:0 0;">Остатки товаров на складах</div><div style="left:182px;top:593px;width:1334px;height:1px;background:#c7be9a;"></div><div style="left:182px;top:599px;width:333px;height:122px;background:#fff;border:1px solid #b8b08a;"></div><div style="left:183px;top:600px;width:333px;height:20px;background:#d0cfb7;"></div><div style="left:183px;top:620px;width:333px;height:1px;background:#b8b08a;"></div><div class="t" style="top:605px;color:#000;font-size:12px;left:187px;transform:scaleX(0.915);transform-origin:0 0;">Типы цен</div><div style="left:183px;top:621px;width:333px;height:18px;background:#5067c7;"></div><div style="left:183px;top:639px;width:333px;height:1px;background:#b8b08a;"></div><div style="left:183px;top:658px;width:333px;height:1px;background:#b8b08a;"></div><div style="left:187px;top:623px;width:11px;height:11px;background:#fff;border:1px solid #8a8a7a;"></div><svg style="left:188px;top:624px" width="11" height="11" viewBox="0 0 11 11"><path d="M2 5.5L4.3 8L9 2.5" fill="none" stroke="#000" stroke-width="2"/></svg><div style="left:187px;top:642px;width:11px;height:11px;background:#fff;border:1px solid #c8c0a0;"></div><div class="t" style="top:625px;color:#fff;font-size:12px;left:202px;transform:scaleX(0.915);transform-origin:0 0;">.Розничные</div><div class="t" style="top:644px;color:#000;font-size:12px;left:202px;transform:scaleX(0.915);transform-origin:0 0;">Закупочная</div><div style="left:523px;top:599px;width:998px;height:122px;background:#fff;border:1px solid #b8b08a;"></div><div style="left:524px;top:600px;width:992px;height:20px;background:#f6f1e1;"></div><div style="left:524px;top:600px;width:349px;height:20px;background:#d0cfb7;"></div><div style="left:524px;top:620px;width:992px;height:1px;background:#b8b08a;"></div><div style="left:524px;top:621px;width:992px;height:77px;background:#fdfaf5;"></div><div style="left:873px;top:600px;width:1px;height:20px;background:#b8b08a;"></div><div style="left:938px;top:600px;width:1px;height:20px;background:#b8b08a;"></div><div style="left:1003px;top:600px;width:1px;height:20px;background:#b8b08a;"></div><div style="left:1068px;top:600px;width:1px;height:20px;background:#b8b08a;"></div><div style="left:1133px;top:600px;width:1px;height:20px;background:#b8b08a;"></div><div style="left:1198px;top:600px;width:1px;height:20px;background:#b8b08a;"></div><div style="left:1346px;top:600px;width:1px;height:20px;background:#b8b08a;"></div><div class="t" style="top:605px;color:#2a2000;font-size:12px;left:527px;transform:scaleX(0.915);transform-origin:0 0;">Характеристика/Склад</div><div class="t" style="top:605px;color:#4d3b0e;font-size:12px;left:877px;transform:scaleX(0.915);transform-origin:0 0;">Склад</div><div class="t" style="top:605px;color:#4d3b0e;font-size:12px;left:942px;transform:scaleX(0.915);transform-origin:0 0;">Алёша</div><div class="t" style="top:605px;color:#4d3b0e;font-size:12px;left:1007px;transform:scaleX(0.915);transform-origin:0 0;">ММ</div><div class="t" style="top:605px;color:#4d3b0e;font-size:12px;left:1072px;transform:scaleX(0.915);transform-origin:0 0;">Мухина</div><div class="t" style="top:605px;color:#4d3b0e;font-size:12px;left:1137px;transform:scaleX(0.915);transform-origin:0 0;">ХФ</div><div class="t" style="top:605px;color:#4d3b0e;font-size:12px;left:1202px;transform:scaleX(0.915);transform-origin:0 0;">В пути, шт.</div><div class="t" style="top:605px;color:#4d3b0e;font-size:12px;left:1350px;transform:scaleX(0.915);transform-origin:0 0;">.Розничные Цена, руб.</div><svg style="left:533px;top:625px" width="9" height="9" viewBox="0 0 9 9"><circle cx="4.5" cy="4.5" r="4" fill="#fff" stroke="#a8a8a8"/><path d="M4.5 2V7M2 4.5H7" stroke="#6e6e6e" stroke-width="1"/></svg><div class="t" style="top:625px;color:#000;font-size:12px;left:549px;transform:scaleX(0.915);transform-origin:0 0;">венге</div><div class="t" style="top:625px;color:#000;font-size:12px;left:870.43px;width:65.57px;text-align:right;transform:scaleX(0.915);transform-origin:100% 0;">10</div><div class="t" style="top:625px;color:#000;font-size:12px;left:935.43px;width:65.57px;text-align:right;transform:scaleX(0.915);transform-origin:100% 0;">1</div><div class="t" style="top:625px;color:#000;font-size:12px;left:1065.43px;width:65.57px;text-align:right;transform:scaleX(0.915);transform-origin:100% 0;">2</div><svg style="left:533px;top:644px" width="9" height="9" viewBox="0 0 9 9"><circle cx="4.5" cy="4.5" r="4" fill="#fff" stroke="#a8a8a8"/><path d="M4.5 2V7M2 4.5H7" stroke="#6e6e6e" stroke-width="1"/></svg><div class="t" style="top:644px;color:#000;font-size:12px;left:549px;transform:scaleX(0.915);transform-origin:0 0;">дуб сонома</div><div class="t" style="top:644px;color:#000;font-size:12px;left:870.43px;width:65.57px;text-align:right;transform:scaleX(0.915);transform-origin:100% 0;">7</div><div class="t" style="top:644px;color:#000;font-size:12px;left:935.43px;width:65.57px;text-align:right;transform:scaleX(0.915);transform-origin:100% 0;">1</div><div class="t" style="top:644px;color:#000;font-size:12px;left:1065.43px;width:65.57px;text-align:right;transform:scaleX(0.915);transform-origin:100% 0;">2</div><div class="t" style="top:644px;color:#000;font-size:12px;left:1278.43px;width:65.57px;text-align:right;transform:scaleX(0.915);transform-origin:100% 0;">3</div><svg style="left:533px;top:663px" width="9" height="9" viewBox="0 0 9 9"><circle cx="4.5" cy="4.5" r="4" fill="#fff" stroke="#a8a8a8"/><path d="M4.5 2V7M2 4.5H7" stroke="#6e6e6e" stroke-width="1"/></svg><div class="t" style="top:663px;color:#000;font-size:12px;left:549px;transform:scaleX(0.915);transform-origin:0 0;">слива</div><div class="t" style="top:663px;color:#000;font-size:12px;left:870.43px;width:65.57px;text-align:right;transform:scaleX(0.915);transform-origin:100% 0;">3</div><div class="t" style="top:663px;color:#000;font-size:12px;left:1065.43px;width:65.57px;text-align:right;transform:scaleX(0.915);transform-origin:100% 0;">1</div><svg style="left:533px;top:682px" width="9" height="9" viewBox="0 0 9 9"><circle cx="4.5" cy="4.5" r="4" fill="#fff" stroke="#a8a8a8"/><path d="M4.5 2V7M2 4.5H7" stroke="#6e6e6e" stroke-width="1"/></svg><div class="t" style="top:682px;color:#000;font-size:12px;left:549px;transform:scaleX(0.915);transform-origin:0 0;">шимо тёмный/светлый</div><div class="t" style="top:682px;color:#000;font-size:12px;left:870.43px;width:65.57px;text-align:right;transform:scaleX(0.915);transform-origin:100% 0;">11</div><div class="t" style="top:682px;color:#000;font-size:12px;left:1000.43px;width:65.57px;text-align:right;transform:scaleX(0.915);transform-origin:100% 0;">1</div><div class="t" style="top:682px;color:#000;font-size:12px;left:1065.43px;width:65.57px;text-align:right;transform:scaleX(0.915);transform-origin:100% 0;">1</div><div class="t" style="top:682px;color:#000;font-size:12px;left:1130.43px;width:65.57px;text-align:right;transform:scaleX(0.915);transform-origin:100% 0;">2</div><div style="left:0px;top:724px;width:1516px;height:16px;background:#ebebeb;"></div><div style="left:7px;top:725px;width:1492px;height:17px;border:1px solid #8a8a8a;border-radius:2px;background:linear-gradient(#f6f6f6,#e6e6e6 45%,#cfcfd2 55%,#c2c2c6);"></div><svg style="left:750px;top:728px" width="10" height="9" viewBox="0 0 10 9"><path d="M1.5 0.5V8.5M5 0.5V8.5M8.5 0.5V8.5" stroke="#222" stroke-width="1.6"/></svg>
</body></html>
